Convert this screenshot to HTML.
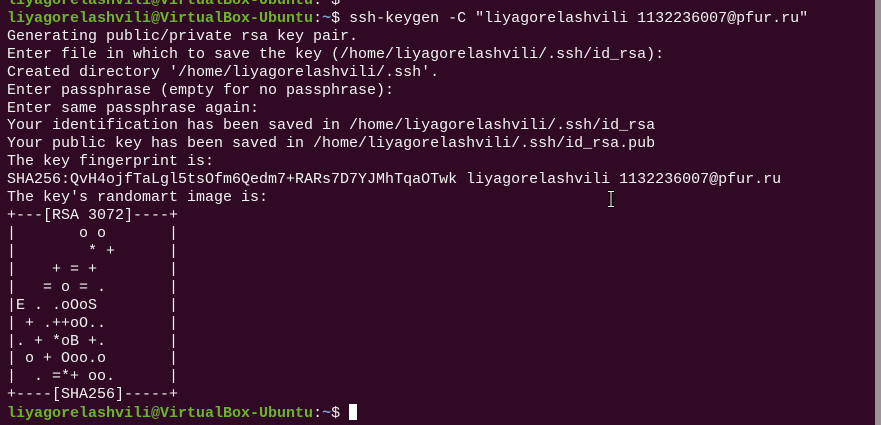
<!DOCTYPE html>
<html><head><meta charset="utf-8"><style>
html,body{margin:0;padding:0;width:881px;height:425px;overflow:hidden;background:#300a24;}
pre{position:absolute;left:7px;top:-8px;margin:0;font-family:"Liberation Mono",monospace;font-size:15px;line-height:17.92px;color:#f2f2f2;white-space:pre;}
.g{color:#6cb52a;font-weight:bold}
.b{color:#7a9fd0;font-weight:bold}
.cur{display:inline-block;width:8px;height:16px;background:#fff;vertical-align:-3px}
.sb{position:absolute;right:0;top:0;width:6px;height:425px;background:#9a9498}
</style></head><body>
<pre><span class="g">liyagorelashvili@VirtualBox-Ubuntu</span>:<span class="b">~</span>$
<span class="g">liyagorelashvili@VirtualBox-Ubuntu</span>:<span class="b">~</span>$ ssh-keygen -C "liyagorelashvili 1132236007@pfur.ru"
Generating public/private rsa key pair.
Enter file in which to save the key (/home/liyagorelashvili/.ssh/id_rsa):
Created directory '/home/liyagorelashvili/.ssh'.
Enter passphrase (empty for no passphrase):
Enter same passphrase again:
Your identification has been saved in /home/liyagorelashvili/.ssh/id_rsa
Your public key has been saved in /home/liyagorelashvili/.ssh/id_rsa.pub
The key fingerprint is:
SHA256:QvH4ojfTaLgl5tsOfm6Qedm7+RARs7D7YJMhTqaOTwk liyagorelashvili 1132236007@pfur.ru
The key's randomart image is:
+---[RSA 3072]----+
|       o o       |
|        * +      |
|    + = +        |
|   = o = .       |
|E . .oOoS        |
| + .++oO..       |
|. + *oB +.       |
| o + Ooo.o       |
|  . =*+ oo.      |
+----[SHA256]-----+
<span class="g">liyagorelashvili@VirtualBox-Ubuntu</span>:<span class="b">~</span>$ <span class="cur"></span></pre>
<svg style="position:absolute;left:606px;top:190px" width="10" height="18"><path d="M2 1.5h6M2 16.5h6M5 1.5v15" stroke="#000" stroke-width="3"/><path d="M2 1.5h6M2 16.5h6M5 1.5v15" stroke="#fff" stroke-width="1"/></svg>
<div class="sb"></div>
</body></html>
